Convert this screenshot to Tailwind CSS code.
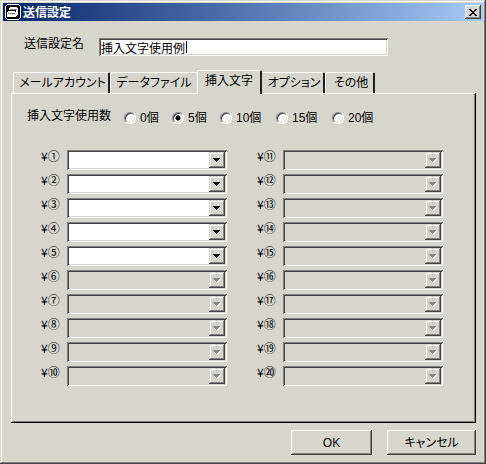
<!DOCTYPE html>
<html lang="ja">
<head>
    <meta charset="UTF-8">
    <meta name="viewport" content="width=device-width, initial-scale=1.0">
    <script src="https://cdn.jsdelivr.net/npm/@tailwindcss/browser@4"></script>
    <title>送信設定</title>
</head>
<body class="bg-[#d6d6ce] text-black text-[12px] leading-4 font-['Liberation_Sans','Noto_Sans_CJK_JP',sans-serif] [font-feature-settings:'palt']">
  <div class="flex flex-col min-h-screen p-[3px] shadow-[inset_-1px_-1px_#424142,inset_1px_1px_#d6d6ce,inset_-2px_-2px_#848284,inset_2px_2px_#fff]">

    <!-- title bar -->
    <header class="flex items-center h-[18px] pl-[2px] pr-[2px] bg-linear-to-r from-[#08246b] to-[#a5cbf7]">
      <svg class="w-4 h-4" viewBox="0 0 16 16" shape-rendering="crispEdges">
        <path d="M1 1h14v14H1z" fill="#000"/>
        <path d="M2 0h12v1H2zM2 15h12v1H2zM0 2h1v12H0zM15 2h1v12h-1zM1 1h1v1H1zM14 1h1v1h-1zM1 14h1v1H1zM14 14h1v1h-1z" fill="#fff"/>
        <path d="M5 3h7v1h1v7h-1v1h-1V6H4V4h1z" fill="#fff"/>
        <path d="M5 5h7v1H5z" fill="#848284"/>
        <path d="M3 7h7v1h1v5H2V8h1z" fill="#fff"/>
        <path d="M3 9h7v1H3z" fill="#848284"/>
      </svg>
      <h1 class="flex-1 ml-[2px] text-white font-bold font-['Noto_Sans_CJK_JP',sans-serif]">送信設定</h1>
      <button type="button" aria-label="閉じる" class="flex justify-center items-center w-4 h-[14px] bg-[#d6d6ce] shadow-[inset_-1px_-1px_#424142,inset_1px_1px_#fff,inset_-2px_-2px_#848284]">
        <svg class="w-2 h-[7px]" viewBox="0 0 8 7" shape-rendering="crispEdges">
          <path d="M0 0h2v1h1v1h2V1h1V0h2v1H7v1H6v1H5v1h1v1h1v1h1v1H6V6H5V5H3v1H2v1H0V6h1V5h1V4h1V3H2V2H1V1H0z"/>
        </svg>
      </button>
    </header>

    <form class="flex flex-col flex-1 pl-2 pr-[7px] pb-[6px]">
      <div class="flex items-start pt-[17px] pl-[13px] pr-[88px]">
        <label for="name" class="w-[75px] -mt-[2px]">送信設定名</label>
        <div class="relative flex-1">
          <input type="text" id="name" value="挿入文字使用例" class="block w-full h-[18px] pl-[2px] bg-white outline-none shadow-[inset_1px_1px_#848284,inset_-1px_-1px_#fff,inset_2px_2px_#424142,inset_-2px_-2px_#d6d6ce]">
          <span class="absolute left-[87px] top-[3px] w-px h-3 bg-black"></span>
        </div>
      </div>

      <!-- tabs -->
      <div role="tablist" class="flex items-end mt-[14px] pl-[2px]">
        <button type="button" role="tab" class="w-[97px] h-[21px] pl-[3px] rounded-t-[2px] border-t border-l border-white border-r-2 border-r-[#212021]">メールアカウント</button>
        <button type="button" role="tab" class="w-[87px] h-[21px] rounded-tl-[2px] border-t border-l border-white">データファイル</button>
        <button type="button" role="tab" aria-selected="true" class="relative w-[65px] h-6 -mb-px pb-[3px] bg-[#d6d6ce] rounded-t-[2px] border-t border-l border-white border-r-2 border-r-[#212021]">挿入文字</button>
        <button type="button" role="tab" class="w-[63px] h-[21px] pl-[3px] rounded-tr-[2px] border-t border-white border-r-2 border-r-[#212021]">オプション</button>
        <button type="button" role="tab" class="w-[50px] h-[21px] pl-[3px] rounded-t-[2px] border-t border-l border-white border-r-2 border-r-[#212021]">その他</button>
      </div>

      <!-- tab page -->
      <div role="tabpanel" class="flex-1 pt-[15px] pl-4 pr-[33px] pb-9 shadow-[inset_-1px_-1px_#000,inset_1px_1px_#fff,inset_-2px_-2px_#848284]">
        <fieldset class="flex items-start">
          <legend class="float-left w-[97px]">挿入文字使用数</legend>
          <div id="counts" class="flex pt-[2px]"></div>
        </fieldset>
        <div id="fields" class="grid grid-cols-2 grid-rows-10 grid-flow-col gap-x-[30px] gap-y-1 mt-6 pl-[14px]"></div>
      </div>

      <div class="flex justify-end gap-[15px] mt-[7px]">
        <button type="submit" class="w-[81px] h-[25px] shadow-[inset_-1px_-1px_#424142,inset_1px_1px_#fff,inset_-2px_-2px_#848284]">OK</button>
        <button type="button" class="w-[89px] h-[25px] shadow-[inset_-1px_-1px_#424142,inset_1px_1px_#fff,inset_-2px_-2px_#848284]">キャンセル</button>
      </div>
    </form>
  </div>

  <script>
    var selected = 5;

    // number of inserted strings
    [0, 5, 10, 15, 20].forEach(function(n) {
      var width = n < 10 ? 'w-12' : 'w-14';
      document.getElementById('counts').innerHTML += `
        <label class="flex items-center gap-1 ${width}">
          <input type="radio" name="count" value="${n}" ${n === selected ? 'checked' : ''}
            class="appearance-none w-3 h-3 rounded-full bg-white border border-[#848284] border-r-white border-b-white shadow-[inset_1px_1px_#424142,inset_-1px_-1px_#d6d6ce] checked:bg-[radial-gradient(circle,#000_2px,#fff_3px)]">
          ${n}個
        </label>`;
    });

    // \① to \⑳
    for (var i = 1; i <= 20; i++) {
      var disabled = i > selected;
      var arrow = disabled
        ? '<path d="M5 7h7v1h-1v1h-1v1H9v1H8v-1H7V9H6V8H5z" fill="#fff"/><path d="M4 6h7v1h-1v1H9v1H8v1H7V9H6V8H5V7H4z" fill="#848284"/>'
        : '<path d="M4 6h7v1h-1v1H9v1H8v1H7V9H6V8H5V7H4z" fill="#000"/>';
      document.getElementById('fields').innerHTML += `
        <div class="flex items-start">
          <label for="f${i}" class="w-[26px] -mt-[2px] font-['Noto_Sans_CJK_JP',sans-serif]">¥${String.fromCharCode(0x245f + i)}</label>
          <div class="relative flex-1">
            <select id="f${i}" ${disabled ? 'disabled' : ''}
              class="appearance-none block w-full h-5 bg-white disabled:bg-[#d6d6ce] shadow-[inset_1px_1px_#848284,inset_-1px_-1px_#fff,inset_2px_2px_#424142,inset_-2px_-2px_#d6d6ce]"></select>
            <svg class="absolute right-[2px] top-[2px] w-4 h-4 pointer-events-none bg-[#d6d6ce] shadow-[inset_-1px_-1px_#424142,inset_1px_1px_#d6d6ce,inset_-2px_-2px_#848284,inset_2px_2px_#fff]" viewBox="0 0 16 16" shape-rendering="crispEdges">${arrow}</svg>
          </div>
        </div>`;
    }
  </script>
</body>
</html>
